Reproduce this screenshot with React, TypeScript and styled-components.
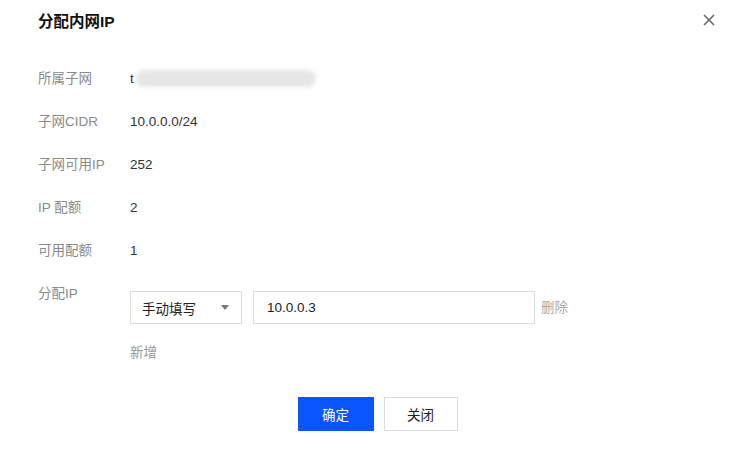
import styled, { createGlobalStyle } from "styled-components";

const GlobalStyle = createGlobalStyle`
	html, body {
		margin: 0;
		padding: 0;
		background: #fff;
	}
	body {
		font-family: "Liberation Sans", "Noto Sans CJK SC", sans-serif;
		font-size: 13.5px;
		color: #333;
	}
	* {
		box-sizing: border-box;
	}
`;

const Dialog = styled.div`
	width: 742px;
	height: 450px;
	padding: 0 25px 0 38px;
	display: flex;
	flex-direction: column;
`;
const Header = styled.div`
	height: 40px;
	display: flex;
	justify-content: space-between;
	align-items: center;
`;
const Title = styled.h3`
	margin: 0;
	font-size: 15.5px;
	font-weight: 700;
	color: #111;
`;
const CloseButton = styled.button`
	width: 16px;
	height: 16px;
	padding: 0;
	border: none;
	background: none;
	display: flex;
	justify-content: center;
	align-items: center;
	cursor: pointer;
`;
const Form = styled.div`
	margin-top: 17px;
	display: flex;
	flex-direction: column;
`;
const Row = styled.div`
	height: 43px;
	display: flex;
	align-items: center;
`;
const Label = styled.div`
	width: 92px;
	flex-shrink: 0;
	color: #8a8a8a;
	line-height: 20px;
`;
const Value = styled.div`
	color: #333;
	display: flex;
	align-items: center;
`;
const Masked = styled.span`
	display: inline-block;
	width: 180px;
	height: 17px;
	margin-left: 2px;
	border-radius: 8px;
	background: #e6e6e6;
	filter: blur(2px);
`;
const IpRow = styled.div`
	margin-top: 12px;
	display: flex;
	align-items: flex-start;
`;
const Controls = styled.div`
	display: flex;
	flex-direction: column;
	padding-top: 7px;
`;
const Line = styled.div`
	display: flex;
	align-items: center;
	gap: 6px;
`;
const Select = styled.div`
	width: 112px;
	height: 33px;
	margin-right: 5px;
	padding: 0 12px 0 11px;
	border: 1px solid #ddd;
	display: flex;
	justify-content: space-between;
	align-items: center;
	color: #222;
`;
const Caret = styled.span`
	width: 0;
	height: 0;
	border-left: 4px solid transparent;
	border-right: 4px solid transparent;
	border-top: 5px solid #777;
`;
const Input = styled.div`
	width: 282px;
	height: 33px;
	padding: 0 13px;
	border: 1px solid #ddd;
	display: flex;
	align-items: center;
	color: #222;
`;
const TextLink = styled.span<{ tone: string }>`
	color: ${props => props.tone};
	line-height: 20px;
	cursor: pointer;
`;
const AddLink = styled(TextLink)`
	margin-top: 19px;
`;
const Footer = styled.div`
	margin-top: 34px;
	display: flex;
	justify-content: center;
	gap: 10px;
`;
const Button = styled.button<{ primary?: boolean }>`
	height: 34px;
	width: ${props => (props.primary ? "76px" : "74px")};
	border: 1px solid ${props => (props.primary ? "#0a55ff" : "#ddd")};
	background: ${props => (props.primary ? "#0a55ff" : "#fff")};
	color: ${props => (props.primary ? "#fff" : "#222")};
	font-family: inherit;
	font-size: 13.5px;
	cursor: pointer;
`;

const infoRows = [
	{ label: "子网CIDR", value: "10.0.0.0/24" },
	{ label: "子网可用IP", value: "252" },
	{ label: "IP 配额", value: "2" },
	{ label: "可用配额", value: "1" },
];

function App() {
	return (
		<>
			<GlobalStyle />
			<Dialog>
				<Header>
					<Title>分配内网IP</Title>
					<CloseButton aria-label="关闭">
						<svg width="12" height="12" viewBox="0 0 12 12">
							<path d="M1 1L11 11M11 1L1 11" stroke="#666" strokeWidth="1.6" />
						</svg>
					</CloseButton>
				</Header>
				<Form>
					<Row>
						<Label>所属子网</Label>
						<Value>
							t<Masked />
						</Value>
					</Row>
					{infoRows.map(row => (
						<Row key={row.label}>
							<Label>{row.label}</Label>
							<Value>{row.value}</Value>
						</Row>
					))}
					<IpRow>
						<Label>分配IP</Label>
						<Controls>
							<Line>
								<Select>
									<span>手动填写</span>
									<Caret />
								</Select>
								<Input>10.0.0.3</Input>
								<TextLink tone="#aaa">删除</TextLink>
							</Line>
							<AddLink tone="#999">新增</AddLink>
						</Controls>
					</IpRow>
				</Form>
				<Footer>
					<Button primary>确定</Button>
					<Button>关闭</Button>
				</Footer>
			</Dialog>
		</>
	);
}

export default App;
